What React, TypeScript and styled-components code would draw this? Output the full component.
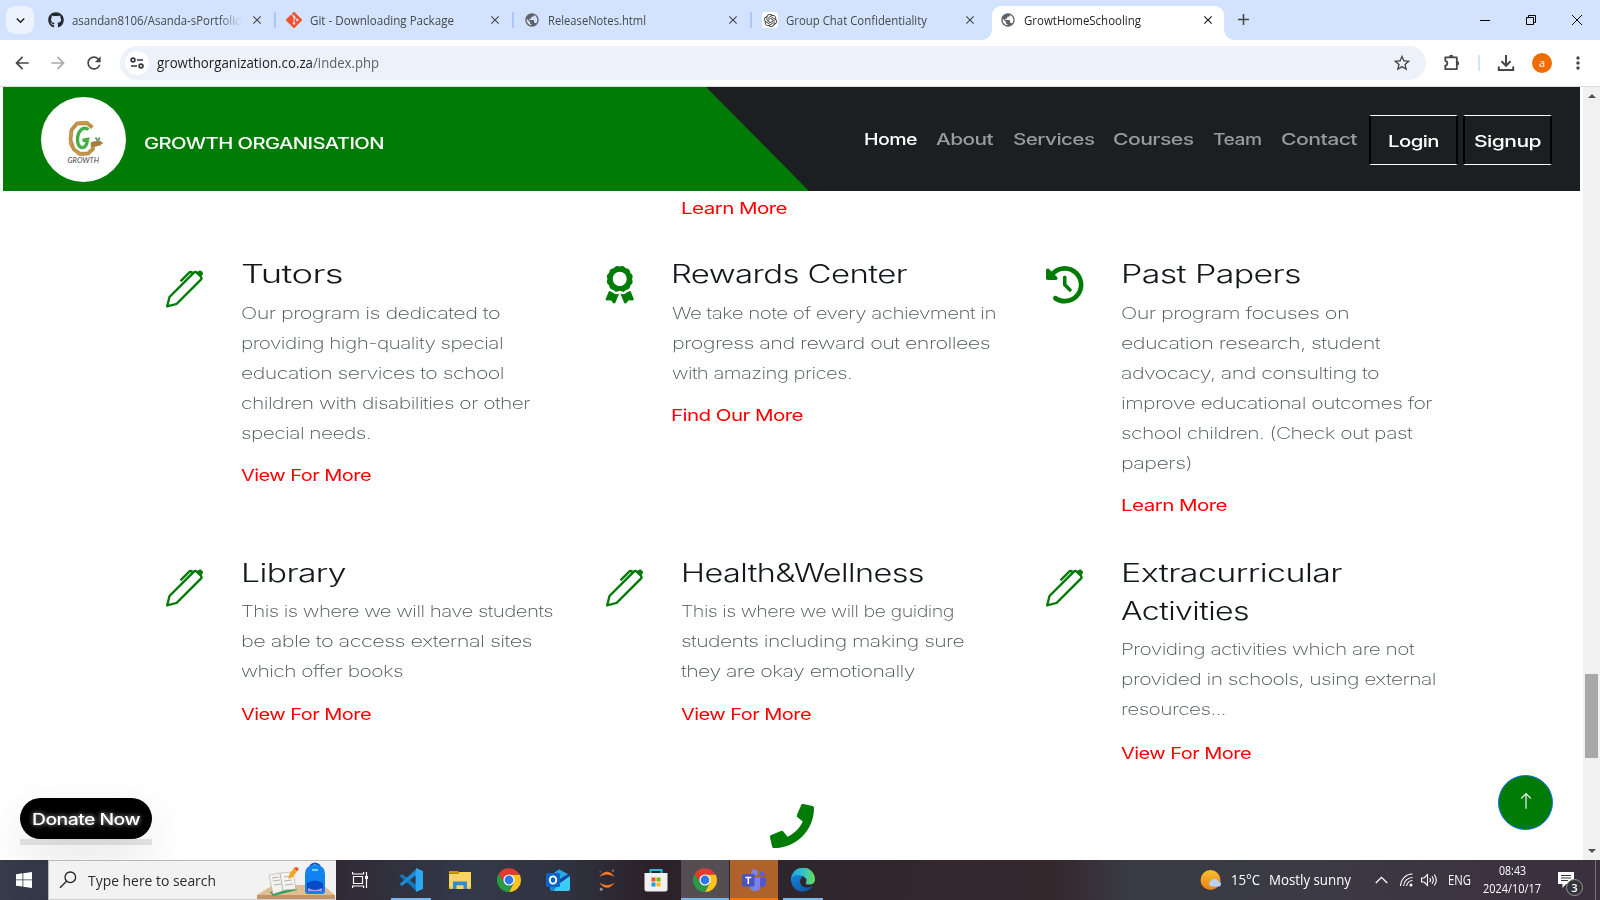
import React, { useLayoutEffect, useRef, useState } from "react";
import styled, { createGlobalStyle, css } from "styled-components";
import { FaPhone, FaGithub, FaAward } from "react-icons/fa";
import { FaClockRotateLeft } from "react-icons/fa6";
import { BsPen, BsArrowUp } from "react-icons/bs";
import { SiGit, SiOpenai } from "react-icons/si";
import {
  MdPublic,
  MdClose,
  MdAdd,
  MdArrowBack,
  MdArrowForward,
  MdRefresh,
  MdStarBorder,
  MdMoreVert,
  MdKeyboardArrowDown,
} from "react-icons/md";

const UI = '"Open Sans", "Noto Sans", sans-serif';
const SITE = 'Inter, "Liberation Sans", sans-serif';

const GlobalStyle = createGlobalStyle`
  * { box-sizing: border-box; }
  body { margin: 0; background: #fff; overflow: hidden; }
`;

/* ---------- text stretched to a set width ---------- */

const FitBox = styled.span<{ $w: number }>`
  display: block;
  flex: none;
  width: ${(p) => p.$w}px;
  white-space: nowrap;
`;
const FitInner = styled.span`
  display: inline-block;
  transform-origin: 0 50%;
`;

function Fit({ w, children }: { w: number; children: React.ReactNode }) {
  const ref = useRef<HTMLSpanElement>(null);
  const [scale, setScale] = useState(1);
  useLayoutEffect(() => {
    const el = ref.current;
    if (!el) return;
    el.style.transform = "none";
    const k = w / el.getBoundingClientRect().width;
    el.style.transform = `scaleX(${k})`;
    setScale(k);
  }, [w, children]);
  return (
    <FitBox $w={w}>
      <FitInner ref={ref} style={{ transform: `scaleX(${scale})` }}>
        {children}
      </FitInner>
    </FitBox>
  );
}

/* ---------- browser chrome ---------- */

const Screen = styled.div`
  width: 1600px;
  height: 900px;
  display: flex;
  flex-direction: column;
  overflow: hidden;
  font-family: ${UI};
`;

const TabStrip = styled.div`
  height: 40px;
  flex: none;
  display: flex;
  background: #d3e3fd;
  padding-left: 6px;
`;
const TabSearch = styled.div`
  width: 28px;
  height: 28px;
  margin: 6px 4px 0 0;
  border-radius: 9px;
  background: #ecf2fe;
  display: flex;
  align-items: center;
  justify-content: center;
  font-size: 17px;
  color: #1f1f1f;
`;
const Tab = styled.div<{ $active?: boolean }>`
  position: relative;
  width: ${(p) => (p.$active ? 232 : 238)}px;
  height: ${(p) => (p.$active ? 34 : 28)}px;
  margin-top: 6px;
  padding: 0 0 0 ${(p) => (p.$active ? 8 : 10)}px;
  display: flex;
  align-items: center;
  color: ${(p) => (p.$active ? "#1f1f1f" : "#45494e")};
  ${(p) =>
    p.$active
      ? css`
          margin-left: 2px;
          background: #fff;
          border-radius: 9px 9px 0 0;
          padding-bottom: 6px;
          &::before,
          &::after {
            content: "";
            position: absolute;
            bottom: 0;
            width: 10px;
            height: 10px;
          }
          &::before {
            left: -10px;
            background: radial-gradient(circle at 0 0, transparent 9.5px, #fff 10px);
          }
          &::after {
            right: -10px;
            background: radial-gradient(circle at 100% 0, transparent 9.5px, #fff 10px);
          }
        `
      : ""}
`;
const Favicon = styled.span<{ $c?: string; $tile?: boolean }>`
  width: 16px;
  height: 16px;
  flex: none;
  display: flex;
  align-items: center;
  justify-content: center;
  margin-right: 8px;
  font-size: ${(p) => (p.$tile ? 13 : 16)}px;
  color: ${(p) => p.$c || "#5f6368"};
  border-radius: 3px;
  background: ${(p) => (p.$tile ? "#fff" : "transparent")};
`;
const TabTitle = styled.span<{ $fade?: boolean }>`
  flex: 1;
  font-size: 12px;
  line-height: 18px;
  padding-top: 1px;
  overflow: hidden;
  ${(p) => (p.$fade ? "mask-image: linear-gradient(90deg, #000 147px, transparent 170px);" : "")}
`;
const TabClose = styled.span<{ $edge?: boolean; $last?: boolean }>`
  width: 14px;
  height: 14px;
  margin-right: ${(p) => (p.$edge ? 9 : p.$last ? 13 : 10)}px;
  font-size: 14px;
  line-height: 0;
  stroke: currentColor;
  stroke-width: 0.6px;
`;
const TabRule = styled.span`
  width: 2px;
  height: 16px;
  background: #a8c7fa;
`;
const NewTab = styled.div`
  margin: 10px 0 0 10px;
  font-size: 19px;
  line-height: 0;
  height: 20px;
  color: #454746;
`;
const WindowButtons = styled.div`
  margin-left: auto;
  height: 40px;
  display: flex;
  align-items: center;
  & > svg { width: 46px; height: 16px; }
`;

const Toolbar = styled.div`
  height: 47px;
  flex: none;
  display: flex;
  align-items: center;
  background: #fff;
  border-bottom: 1px solid #dcdde0;
  padding: 0 0 1px 12px;
  color: #474747;
  font-size: 20px;
`;
const ToolIcon = styled.span<{ $w: number; $c?: string }>`
  width: ${(p) => p.$w}px;
  flex: none;
  display: flex;
  color: ${(p) => p.$c || "#474747"};
`;
const Omnibox = styled.div`
  width: 1306px;
  height: 34px;
  border-radius: 17px;
  background: #ecf1fa;
  display: flex;
  align-items: center;
  padding: 0 14px 0 5px;
`;
const SiteInfo = styled.span`
  width: 24px;
  height: 24px;
  border-radius: 50%;
  background: #fff;
  display: flex;
  align-items: center;
  justify-content: center;
  margin-right: 8px;
`;
const Url = styled.span<{ $dim?: boolean }>`
  font-size: 14px;
  line-height: 20px;
  padding-top: 1px;
  color: ${(p) => (p.$dim ? "#5c6067" : "#1f1f1f")};
`;
const Push = styled.span`
  flex: 1;
`;
const ToolRule = styled.span`
  width: 2px;
  height: 16px;
  background: #d3e3fd;
  margin-right: 16px;
`;
const Avatar = styled.span`
  width: 20px;
  height: 20px;
  border-radius: 50%;
  background: #ef6c00;
  color: #fff;
  font-size: 11px;
  line-height: 19px;
  text-align: center;
  margin-right: 16px;
`;

/* ---------- site ---------- */

const Viewport = styled.div`
  height: 773px;
  flex: none;
  display: flex;
  font-family: ${SITE};
  letter-spacing: -0.45px;
`;
const Page = styled.div`
  position: relative;
  width: 1583px;
  background: #fff;
  overflow: hidden;
`;
const Header = styled.header`
  position: relative;
  margin: 0 3px;
  height: 104px;
  background: #1b1f22;
  display: flex;
  z-index: 0;
  &::before {
    content: "";
    position: absolute;
    inset: 0;
    z-index: -1;
    background: #007b05;
    clip-path: polygon(0 0, 703px 0, 806px 100%, 0 100%);
  }
`;
const LogoDisc = styled.div`
  width: 85px;
  height: 85px;
  margin: 10px 18px 0 38px;
  border-radius: 50%;
  background: #fff;
`;
const Brand = styled.div`
  width: 720px;
  font-size: 15.5px;
  font-weight: 500;
  line-height: 24px;
  margin-top: 45px;
  color: #fff;
`;
const NavItem = styled.a<{ $on?: boolean }>`
  margin: 40px 19.3px 0 0;
  height: 24px;
  font-size: 16px;
  font-weight: 500;
  line-height: 24px;
  color: ${(p) => (p.$on ? "#fff" : "#989a9b")};
`;
const NavButton = styled.a`
  height: 50px;
  width: 89px;
  margin: 28px 5px 0 0;
  display: flex;
  justify-content: center;
  border: solid;
  border-width: 1px 2px;
  border-color: #fff #000;
  font-size: 16.5px;
  font-weight: 500;
  line-height: 51px;
  color: #fff;
`;
const NavGap = styled.span`
  width: 12px;
  margin-left: -19px;
  flex: none;
`;

const Services = styled.main`
  padding: 1.6px 0 0 131px;
`;
const Row = styled.div<{ $h: number }>`
  display: flex;
  height: ${(p) => p.$h}px;
`;
const Card = styled.article`
  width: 440px;
  display: flex;
  padding-left: 35px;
`;
const CardIcon = styled.div<{ $w: number; $drop?: number; $pull?: number }>`
  width: ${(p) => p.$w}px;
  padding-top: ${(p) => p.$drop ?? 11.5}px;
  flex: none;
  font-size: 37.5px;
  line-height: 0;
  color: #007b05;
  & > svg { margin-left: ${(p) => -(p.$pull ?? 0)}px; }
`;
const Title = styled.h4<{ $tight?: boolean }>`
  margin: 0 0 ${(p) => (p.$tight ? 4 : 5.5)}px -0.5px;
  font-size: 25px;
  font-weight: 350;
  line-height: 38.2px;
  color: #14171b;
`;
const Copy = styled.p<{ $loose?: boolean }>`
  margin: 0 0 ${(p) => (p.$loose ? 13.5 : 12)}px;
  font-size: 16.5px;
  font-weight: 200;
  line-height: 30px;
  color: #50555a;
`;
const More = styled.a`
  display: block;
  margin-left: -0.5px;
  font-size: 16.5px;
  font-weight: 400;
  line-height: 30px;
  color: #ff0000;
`;
const PhoneSpot = styled.div`
  position: absolute;
  left: 770px;
  top: 716.5px;
  font-size: 44px;
  line-height: 0;
  color: #007b05;
`;
const Donate = styled.div`
  position: absolute;
  left: 20px;
  top: 711px;
  width: 132px;
  height: 47px;
  background: linear-gradient(transparent 41px, #e7e7e7 41px);
`;
const DonatePill = styled.div`
  height: 41px;
  border-radius: 21px;
  background: #000;
  color: #fff;
  padding-left: 12px;
  font-size: 16px;
  font-weight: 500;
  line-height: 42px;
  text-shadow: 0 0 5px rgba(255, 255, 255, 0.75);
  box-shadow: 0 20px 50px rgba(0, 0, 0, 0.11);
`;
const ToTop = styled.div`
  position: absolute;
  left: 1498px;
  top: 688px;
  width: 55px;
  height: 55px;
  border-radius: 50%;
  border: 1px solid #0d6efd;
  background: #007b05;
  color: #fff;
  font-size: 18px;
  stroke: #fff;
  stroke-width: 0.4px;
  display: flex;
  align-items: center;
  justify-content: center;
  padding-bottom: 3px;
`;
const Scrollbar = styled.div`
  width: 17px;
  background: #f1f1f1;
  display: flex;
  flex-direction: column;
  align-items: center;
`;
const Thumb = styled.div`
  width: 13px;
  height: 84px;
  margin-top: 576px;
  margin-bottom: auto;
  background: #a8a8a8;
`;
const Arrow = styled.i<{ $up?: boolean }>`
  margin: ${(p) => (p.$up ? "7px 0 0" : "0 0 7px")};
  border: 4px solid transparent;
  ${(p) => (p.$up ? "border-bottom-color: #505050; border-top: 0;" : "border-top-color: #505050; border-bottom: 0;")}
`;

/* ---------- taskbar ---------- */

const Taskbar = styled.footer`
  height: 40px;
  flex: none;
  display: flex;
  color: #fff;
  background: linear-gradient(90deg, #353b49 0, #333644 50px, #302a37 340px, #333a48 470px, #30323f 570px, #2b2128 650px, #30262e 830px, #34272d 950px, #34272c 1050px, #3a3b45 1130px, #3b3a45 1300px, #3b303d 1600px);
`;
const Start = styled.div`
  width: 48px;
  display: flex;
  align-items: center;
  justify-content: center;
`;
const SearchBox = styled.div`
  width: 288px;
  background: #f2f2f2;
  border: 1px solid #b9b9b9;
  border-right: 0;
  border-bottom-color: #cfcfcf;
  display: flex;
  align-items: center;
  font-size: 15px;
  line-height: 20px;
  color: #2b2b2b;
  padding-left: 10px;
`;
const SearchLabel = styled.div`
  margin: 0 41px 0 11px;
`;
const TaskIcon = styled.div<{ $bg?: string; $line?: string; $inset?: number; $after?: number }>`
  width: 49px;
  height: 40px;
  margin-right: ${(p) => p.$after ?? 0}px;
  display: flex;
  align-items: center;
  justify-content: center;
  border-right: 1px solid transparent;
  background-clip: padding-box;
  background-color: ${(p) => p.$bg || "transparent"};
  position: relative;
  &::after {
    content: "";
    position: absolute;
    bottom: 0;
    left: ${(p) => p.$inset ?? 0}px;
    right: ${(p) => p.$inset ?? 0}px;
    height: 2px;
    background: ${(p) => p.$line || "transparent"};
  }
`;
const Tray = styled.div`
  margin: 0 4px 0 auto;
  display: flex;
  align-items: center;
  font-size: 14px;
  line-height: 20px;
`;
const TrayItem = styled.div<{ $gap: number }>`
  flex: none;
  line-height: 20px;
  margin-right: ${(p) => p.$gap}px;
  & > svg { display: block; }
`;
const Clock = styled.div`
  display: flex;
  flex-direction: column;
  align-items: center;
  font-size: 12px;
  line-height: 18px;
  margin-right: 17px;
`;
const Notices = styled.div`
  position: relative;
  width: 38px;
  height: 40px;
  border-right: 1px solid #77727b;
  & > svg { display: block; margin-top: 11px; }
`;
const Count = styled.span`
  position: absolute;
  left: 8px;
  top: 19px;
  width: 17px;
  height: 17px;
  border-radius: 50%;
  background: #33333a;
  border: 1px solid #999;
  font-size: 11px;
  font-weight: 600;
  line-height: 15px;
  text-align: center;
`;

/* ---------- drawings ---------- */

const GrowthLogo = () => (
  <svg width="85" height="85" viewBox="0 0 85 85">
    <path
      d="M51.500 30.500 L46 26 L36 26.500 L30.500 33 L29.500 43 L32.500 52 L39 57 L47 56.500 L52 52 L51.500 47 L60 46.500"
      fill="none"
      stroke="#bd9048"
      strokeWidth="3.800"
      strokeLinejoin="round"
    />
    <path d="M34 26.500l5-2.500 6 .300 4 3.200-7-1zM28 42l.500-8 4 3zM30 51l-2.500-5 4-1zM45 58l-8 .500-4-5z" fill="#c69b50" />
    <path d="M50 45l8-1.500 4.500 2.500-7 3.500-5 .500z" fill="#a97b3c" />
    <path d="M54.500 40.500l2 3M58.500 40.500l-1 3" stroke="#4e9b72" strokeWidth="1.800" />
    <path
      d="M47.500 32.500C42 28.500 36.500 34.500 36.500 42.500C36.500 51.500 43.500 53 45.500 47L46.500 42.500L41.500 43.500"
      fill="none"
      stroke="#45b04a"
      strokeWidth="3.400"
    />
    <text
      x="26.500"
      y="66"
      fontFamily="Lato, sans-serif"
      fontStyle="italic"
      fontSize="7.500"
      letterSpacing="0"
      textLength="31.500"
      lengthAdjust="spacingAndGlyphs"
      fill="#444"
    >
      GROWTH
    </text>
  </svg>
);

const TuneIcon = () => (
  <svg width="14" height="12" viewBox="0 0 14 12" fill="none" stroke="#33363a" strokeWidth="1.700">
    <circle cx="3" cy="3" r="1.900" />
    <path d="M7 3h6M1 9h6" />
    <circle cx="11" cy="9" r="1.900" />
  </svg>
);

const PuzzleIcon = () => (
  <svg width="20" height="20" viewBox="0 0 20 20">
    <path
      d="M3.300 4.300h11.500v11.900H3.300v-3.500a2.500 2.500 0 0 0 0-4.900z"
      fill="none"
      stroke="#474747"
      strokeWidth="1.800"
      strokeLinejoin="round"
    />
    <path d="M7 4a2.200 2.200 0 0 1 4.400 0zM15 8a2.200 2.200 0 0 1 0 4.400z" fill="#474747" />
  </svg>
);

const DownloadIcon = () => (
  <svg width="20" height="20" viewBox="0 0 20 20" fill="none" stroke="#474747" strokeWidth="2">
    <path d="M10 2v10.500M5.500 8.300l4.500 4.500 4.500-4.500M2.800 13.500V17h14.400v-3.500" />
  </svg>
);

const ChromeLogo = () => (
  <svg width="24" height="24" viewBox="0 0 48 48">
    <path d="M24 13 H45.300 A24 24 0 0 1 24 48 L33.500 29.500 Z" fill="#fcc31e" />
    <path d="M3.200 12 L14.500 29.500 A11 11 0 0 0 33.500 29.500 L24 48 A24 24 0 0 1 3.200 12Z" fill="#2a9a48" />
    <path d="M3.200 12 A24 24 0 0 1 45 13 H24 A11 11 0 0 0 14 28 Z" fill="#e33b2e" />
    <circle cx="24" cy="24" r="11.200" fill="#fff" />
    <circle cx="24" cy="24" r="8.800" fill="#2f76e8" />
  </svg>
);

const CodeLogo = () => (
  <svg width="24" height="24" viewBox="0 0 24 24">
    <path d="M0.500 8 L3 6 L18 17.400 V23.500 Z" fill="#1176bd" />
    <path d="M0.500 16 L3 18 L18 6.600 V0.500 Z" fill="#1b8ad2" />
    <path d="M17 0 L24 3 V21 L17 24 L16.600 18 V6 Z" fill="#2aa8f2" />
  </svg>
);

const FolderLogo = () => (
  <svg width="22" height="20" viewBox="0 0 22 20">
    <path d="M0 1h9l1.500 2H0z" fill="#d99200" />
    <path d="M0 3.500h9.500l1-1.500H22v17H0z" fill="#fcd462" />
    <path d="M4 11.500h14V19h-3.500v-3.700h-7V19H4z" fill="#2f8bd8" />
    <path d="M0 17.500h4V19H0zM18 17.500h4V19h-4z" fill="#f0b93a" />
  </svg>
);

const OutlookLogo = () => (
  <svg width="24" height="24" viewBox="0 0 24 24">
    <path d="M4 7.500 L13 1.500 L23 7.500 V21 Q23 23 21 23 H6 Q4 23 4 21Z" fill="#1b86d6" />
    <path d="M13 14 L24 7.500 V21 Q24 23 22 23 H8 Z" fill="#3ccbf5" />
    <path d="M12 12 L22 5.500 L24 8 L14 15 Z" fill="#0a4596" />
    <path d="M5 7 L13 1.500 L22 6 L14 11 H5Z" fill="#2aa6e6" />
    <rect x="0" y="5" width="14" height="14" rx="1.500" fill="#0b64c4" />
    <ellipse cx="7" cy="12" rx="3.200" ry="3.600" fill="none" stroke="#fff" strokeWidth="1.900" />
  </svg>
);

const JupyterLogo = () => (
  <svg width="18" height="22" viewBox="0 0 18 22">
    <path d="M1.200 8 Q9 -2.500 16.800 8 Q9 2.800 1.200 8Z" fill="#f37726" />
    <path d="M1.200 13.500 Q9 24 16.800 13.500 Q9 18.800 1.200 13.500Z" fill="#f37726" />
    <circle cx="15" cy="1.600" r="1.200" fill="#777" />
    <circle cx="3.200" cy="20.300" r="1.500" fill="#999" />
    <circle cx="2.200" cy="2.800" r=".8" fill="#777" />
  </svg>
);

const StoreLogo = () => (
  <svg width="24" height="24" viewBox="0 0 24 24">
    <path d="M6.500 6 V2 H17.500 V6" fill="none" stroke="#29b6ea" strokeWidth="2" />
    <path d="M.5 5h23v16q0 2.500-2.500 2.500h-18q-2.500 0-2.500-2.500z" fill="#f1f1f1" />
    <path d="M7.500 9.500h4v4h-4z" fill="#f04e23" />
    <path d="M12.500 9.500h4v4h-4z" fill="#7eb900" />
    <path d="M7.500 14.500h4v4h-4z" fill="#1ba1e8" />
    <path d="M12.500 14.500h4v4h-4z" fill="#fdb813" />
  </svg>
);

const TeamsLogo = () => (
  <svg width="24" height="22" viewBox="0 0 24 22">
    <circle cx="20" cy="5" r="2.500" fill="#5b62d0" />
    <circle cx="12.500" cy="3.500" r="3.300" fill="#7b83eb" />
    <path d="M17 8.500h7v7a4 4 0 0 1-7 1z" fill="#5059c9" />
    <path d="M9 8.500h9v8a5 5 0 0 1-10 2z" fill="#7b83eb" />
    <rect x="0" y="5" width="12.500" height="12.500" rx="1" fill="#4b53bc" />
    <path d="M3.300 8.500h6M6.300 8.500v6.500" stroke="#fff" strokeWidth="1.600" />
  </svg>
);

const EdgeLogo = () => (
  <svg width="24" height="24" viewBox="0 0 24 24">
    <defs>
      <linearGradient id="edgeTop" x1="0" x2="1">
        <stop offset="0" stopColor="#1c9fe0" />
        <stop offset=".55" stopColor="#35c5c7" />
        <stop offset="1" stopColor="#6bdc52" />
      </linearGradient>
      <linearGradient id="edgeLow" x1="0" x2="1" y2="1">
        <stop offset="0" stopColor="#1685d8" />
        <stop offset="1" stopColor="#0c4f9e" />
      </linearGradient>
    </defs>
    <path d="M0 12 A12 12 0 0 1 24 11 C24 16 20 17 16.500 16.500 C13.500 16 15.500 14.500 15.500 12 C15 8 6 5 0 12Z" fill="url(#edgeTop)" />
    <path d="M0 12 C1 7 8 6 11.500 9 C7 12 9 19 15 19.500 Q19 20 22 17.500 C17 27 1 25.500 0 12Z" fill="url(#edgeLow)" />
  </svg>
);

const SchoolArt = () => (
  <svg width="78" height="38" viewBox="0 0 78 38">
    <path d="M16 24h50l12 10H0z" fill="#e2bd92" />
    <path d="M0 34h78v4H0z" fill="#c2946a" />
    <path d="M13 31l25-5 2 3-24 6z" fill="#2f9e58" />
    <path d="M12 14l11-2 13-1 3 17-11 1-12 4z" fill="#f5f3ee" stroke="#b9b4ad" strokeWidth=".7" />
    <path d="M23 12l3 18" stroke="#b8b8b8" />
    <path d="M15 17l7-1M16 20l7-1M17 24l7-1M27 16l7-1M27 20l8-1M28 24l8-1" stroke="#9ba3b0" strokeWidth=".8" />
    <path d="M31 18l2-6 5-6 3 3-5 7z" fill="#f6a623" />
    <path d="M37 7l3-1 2 2-2 2z" fill="#e8523f" />
    <path d="M53 5q5-5 10 0" fill="none" stroke="#0b52c4" strokeWidth="2" />
    <path d="M48 13q0-9 10-9t10 9v17q0 3-3 3H51q-3 0-3-3z" fill="#1183f0" />
    <path d="M50 22q8-5 16 0v8H50z" fill="#0a49c4" />
    <path d="M51 27q7 4 14 0v3H51z" fill="#b29af5" />
    <path d="M55 9h6" stroke="#74d0ff" strokeWidth="2" />
  </svg>
);

/* ---------- data ---------- */

type Service = {
  icon: "pen" | "award" | "history";
  iconWidth: number;
  title: [string, number][];
  copy: [string, number][];
  link: [string, number];
};

const rows: Service[][] = [
  [
    {
      icon: "pen",
      iconWidth: 75,
      title: [["Tutors", 102]],
      copy: [
        ["Our program is dedicated to", 259],
        ["providing high-quality special", 262],
        ["education services to school", 263],
        ["children with disabilities or other", 289],
        ["special needs.", 130],
      ],
      link: ["View For More", 130],
    },
    {
      icon: "award",
      iconWidth: 65.5,
      title: [["Rewards Center", 236]],
      copy: [
        ["We take note of every achievment in", 324],
        ["progress and reward out enrollees", 318],
        ["with amazing prices.", 180],
      ],
      link: ["Find Our More", 132],
    },
    {
      icon: "history",
      iconWidth: 75,
      title: [["Past Papers", 180]],
      copy: [
        ["Our program focuses on", 228],
        ["education research, student", 259],
        ["advocacy, and consulting to", 258],
        ["improve educational outcomes for", 311],
        ["school children. (Check out past", 291],
        ["papers)", 71],
      ],
      link: ["Learn More", 106],
    },
  ],
  [
    {
      icon: "pen",
      iconWidth: 75,
      title: [["Library", 105]],
      copy: [
        ["This is where we will have students", 312],
        ["be able to access external sites", 291],
        ["which offer books", 162],
      ],
      link: ["View For More", 130],
    },
    {
      icon: "pen",
      iconWidth: 75,
      title: [["Health&Wellness", 243]],
      copy: [
        ["This is where we will be guiding", 273],
        ["students including making sure", 283],
        ["they are okay emotionally", 234],
      ],
      link: ["View For More", 130],
    },
    {
      icon: "pen",
      iconWidth: 75,
      title: [
        ["Extracurricular", 221],
        ["Activities", 128],
      ],
      copy: [
        ["Providing activities which are not", 293],
        ["provided in schools, using external", 315],
        ["resources...", 105],
      ],
      link: ["View For More", 130],
    },
  ],
];

const icons = { pen: BsPen, award: FaAward, history: FaClockRotateLeft };

function ServiceCard({ s, second }: { s: Service; second: boolean }) {
  const Icon = icons[s.icon];
  return (
    <Card>
      <CardIcon
        $w={s.iconWidth}
        $drop={s.icon === "pen" ? 15.7 : undefined}
        $pull={s.icon === "award" ? 4.7 : 0}
      >
        <Icon />
      </CardIcon>
      <div>
        <Title $tight={second}>
          {s.title.map(([t, w]) => (
            <Fit key={t} w={w}>{t}</Fit>
          ))}
        </Title>
        <Copy $loose={second}>
          {s.copy.map(([t, w]) => (
            <Fit key={t} w={w}>{t}</Fit>
          ))}
        </Copy>
        <More>
          <Fit w={s.link[1]}>{s.link[0]}</Fit>
        </More>
      </div>
    </Card>
  );
}

const nav: [string, number][] = [
  ["Home", 53],
  ["About", 57],
  ["Services", 81.5],
  ["Courses", 80.5],
  ["Team", 48.5],
  ["Contact", 76],
];

export default function App() {
  return (
    <Screen>
      <GlobalStyle />
      <TabStrip>
        <TabSearch><MdKeyboardArrowDown /></TabSearch>
        <Tab>
          <Favicon $c="#24292f"><FaGithub /></Favicon>
          <TabTitle $fade><Fit w={170}>asandan8106/Asanda-sPortfolio</Fit></TabTitle>
          <TabClose><MdClose /></TabClose>
          <TabRule />
        </Tab>
        <Tab>
          <Favicon $c="#f4502f"><SiGit /></Favicon>
          <TabTitle><Fit w={144}>Git - Downloading Package</Fit></TabTitle>
          <TabClose><MdClose /></TabClose>
          <TabRule />
        </Tab>
        <Tab>
          <Favicon><MdPublic /></Favicon>
          <TabTitle><Fit w={98}>ReleaseNotes.html</Fit></TabTitle>
          <TabClose><MdClose /></TabClose>
          <TabRule />
        </Tab>
        <Tab>
          <Favicon $c="#333" $tile><SiOpenai /></Favicon>
          <TabTitle><Fit w={141}>Group Chat Confidentiality</Fit></TabTitle>
          <TabClose $last><MdClose /></TabClose>
        </Tab>
        <Tab $active>
          <Favicon><MdPublic /></Favicon>
          <TabTitle><Fit w={117}>GrowtHomeSchooling</Fit></TabTitle>
          <TabClose $edge><MdClose /></TabClose>
        </Tab>
        <NewTab><MdAdd /></NewTab>
        <WindowButtons>
          <svg viewBox="0 0 46 16"><path d="M18 8.500h10" stroke="#000" /></svg>
          <svg viewBox="0 0 46 16" fill="none" stroke="#000"><path d="M18.500 5.500h7v7h-7zM20.500 5.500v-2h7v7h-2" /></svg>
          <svg viewBox="0 0 46 16" stroke="#000"><path d="M18 3l10 10M28 3l-10 10" /></svg>
        </WindowButtons>
      </TabStrip>
      <Toolbar>
        <ToolIcon $w={36}><MdArrowBack /></ToolIcon>
        <ToolIcon $w={36} $c="#a9abae"><MdArrowForward /></ToolIcon>
        <ToolIcon $w={36}><MdRefresh /></ToolIcon>
        <Omnibox>
          <SiteInfo><TuneIcon /></SiteInfo>
          <Url><Fit w={156}>growthorganization.co.za</Fit></Url>
          <Url $dim><Fit w={66}>/index.php</Fit></Url>
          <Push />
          <MdStarBorder />
        </Omnibox>
        <Push />
        <ToolIcon $w={36}><PuzzleIcon /></ToolIcon>
        <ToolRule />
        <ToolIcon $w={36}><DownloadIcon /></ToolIcon>
        <Avatar>a</Avatar>
        <ToolIcon $w={32}><MdMoreVert /></ToolIcon>
      </Toolbar>
      <Viewport>
        <Page>
          <Header>
            <LogoDisc><GrowthLogo /></LogoDisc>
            <Brand><Fit w={240}>GROWTH ORGANISATION</Fit></Brand>
            {nav.map(([t, w], i) => (
              <NavItem key={t} $on={i === 0}><Fit w={w}>{t}</Fit></NavItem>
            ))}
            <NavGap />
            <NavButton><Fit w={51}>Login</Fit></NavButton>
            <NavButton><Fit w={67}>Signup</Fit></NavButton>
          </Header>
          <Services>
            <Row $h={62}>
              <Card />
              <Card>
                <CardIcon $w={75} />
                <More><Fit w={106}>Learn More</Fit></More>
              </Card>
            </Row>
            {rows.map((r, i) => (
              <Row key={i} $h={299}>
                {r.map((s) => (
                  <ServiceCard key={s.title[0][0]} s={s} second={i === 1} />
                ))}
              </Row>
            ))}
          </Services>
          <PhoneSpot><FaPhone /></PhoneSpot>
          <Donate>
            <DonatePill><Fit w={108}>Donate Now</Fit></DonatePill>
          </Donate>
          <ToTop><BsArrowUp /></ToTop>
        </Page>
        <Scrollbar>
          <Arrow $up />
          <Thumb />
          <Arrow />
        </Scrollbar>
      </Viewport>
      <Taskbar>
        <Start>
          <svg width="16" height="16" viewBox="0 0 16 16" fill="#fff">
            <path d="M0 2.200l6.500-.9v6.200H0zM7.300 1.200L16 0v7.500H7.300zM0 8.300h6.500v6.300L0 13.700zM7.300 8.300H16V16l-8.700-1.200z" />
          </svg>
        </Start>
        <SearchBox>
          <svg width="18" height="18" viewBox="0 0 18 18" fill="none" stroke="#222" strokeWidth="1.300">
            <circle cx="11.300" cy="6.300" r="5.300" />
            <path d="M7.500 10.200L1 16.700" />
          </svg>
          <SearchLabel><Fit w={128}>Type here to search</Fit></SearchLabel>
          <SchoolArt />
        </SearchBox>
        <TaskIcon $after={2}>
          <svg width="17" height="16" viewBox="0 0 17 16" fill="none" stroke="#fff" strokeWidth="1.200">
            <path d="M1.500 4.500h9v7h-9zM.6 0v2h11V0M.6 16v-2h11v2M14.500 0v16" />
            <path d="M13 4h3v3h-3z" fill="#fff" stroke="none" />
          </svg>
        </TaskIcon>
        <TaskIcon $line="#76b9ed" $inset={4}><CodeLogo /></TaskIcon>
        <TaskIcon><FolderLogo /></TaskIcon>
        <TaskIcon><ChromeLogo /></TaskIcon>
        <TaskIcon><OutlookLogo /></TaskIcon>
        <TaskIcon><JupyterLogo /></TaskIcon>
        <TaskIcon><StoreLogo /></TaskIcon>
        <TaskIcon $bg="#544e53" $line="#76b9ed"><ChromeLogo /></TaskIcon>
        <TaskIcon $bg="#b0622b" $line="#ff7300"><TeamsLogo /></TaskIcon>
        <TaskIcon $line="#76b9ed" $inset={4}><EdgeLogo /></TaskIcon>
        <Tray>
          <TrayItem $gap={8}>
            <svg width="23" height="22" viewBox="0 0 23 22">
              <defs>
                <linearGradient id="sun" y2="1" x2="0"><stop stopColor="#f7c02f" /><stop offset="1" stopColor="#ee7e1b" /></linearGradient>
              </defs>
              <circle cx="10.500" cy="11" r="10" fill="url(#sun)" />
              <path d="M11 17.500a3 3 0 0 1 0-5.500 4 4 0 0 1 7.500.500 2.600 2.600 0 0 1 1 5z" fill="#b9d0f5" />
            </svg>
          </TrayItem>
          <TrayItem $gap={9}><Fit w={29}>15°C</Fit></TrayItem>
          <TrayItem $gap={24}><Fit w={82}>Mostly sunny</Fit></TrayItem>
          <TrayItem $gap={12}>
            <svg width="13" height="8" viewBox="0 0 13 8" fill="none" stroke="#fff" strokeWidth="1.300"><path d="M.8 7l5.700-5.700L12.200 7" /></svg>
          </TrayItem>
          <TrayItem $gap={8}>
            <svg width="13" height="14" viewBox="0 0 13 14" fill="none" stroke="#fff" strokeWidth="1.100">
              <path d="M.6 13A12 12 0 0 1 12.500 1M3.600 13a9 9 0 0 1 9-8.500M6.600 13a6 6 0 0 1 6-5.500" />
              <circle cx="11" cy="12" r="1.500" fill="#fff" stroke="none" />
            </svg>
          </TrayItem>
          <TrayItem $gap={10}>
            <svg width="17" height="14" viewBox="0 0 17 14" fill="none" stroke="#fff" strokeWidth="1.100">
              <path d="M.6 5h2.500L6.500 1.500v11L3.100 9H.6zM8.800 5q1.300 2 0 4M11 3.300q2.600 3.700 0 7.400M13.300 1.500q4 5.500 0 11" />
            </svg>
          </TrayItem>
          <TrayItem $gap={12}><Fit w={23}>ENG</Fit></TrayItem>
          <Clock>
            <Fit w={27}>08:43</Fit>
            <Fit w={58}>2024/10/17</Fit>
          </Clock>
          <Notices>
            <svg width="17" height="18" viewBox="0 0 17 18">
              <path d="M0 1h16v12H8l-3.500 4v-4H0z" fill="#fff" />
              <path d="M3 4.500h10M3 7h10M3 9.500h7" stroke="#3a333f" />
            </svg>
            <Count>3</Count>
          </Notices>
        </Tray>
      </Taskbar>
    </Screen>
  );
}
